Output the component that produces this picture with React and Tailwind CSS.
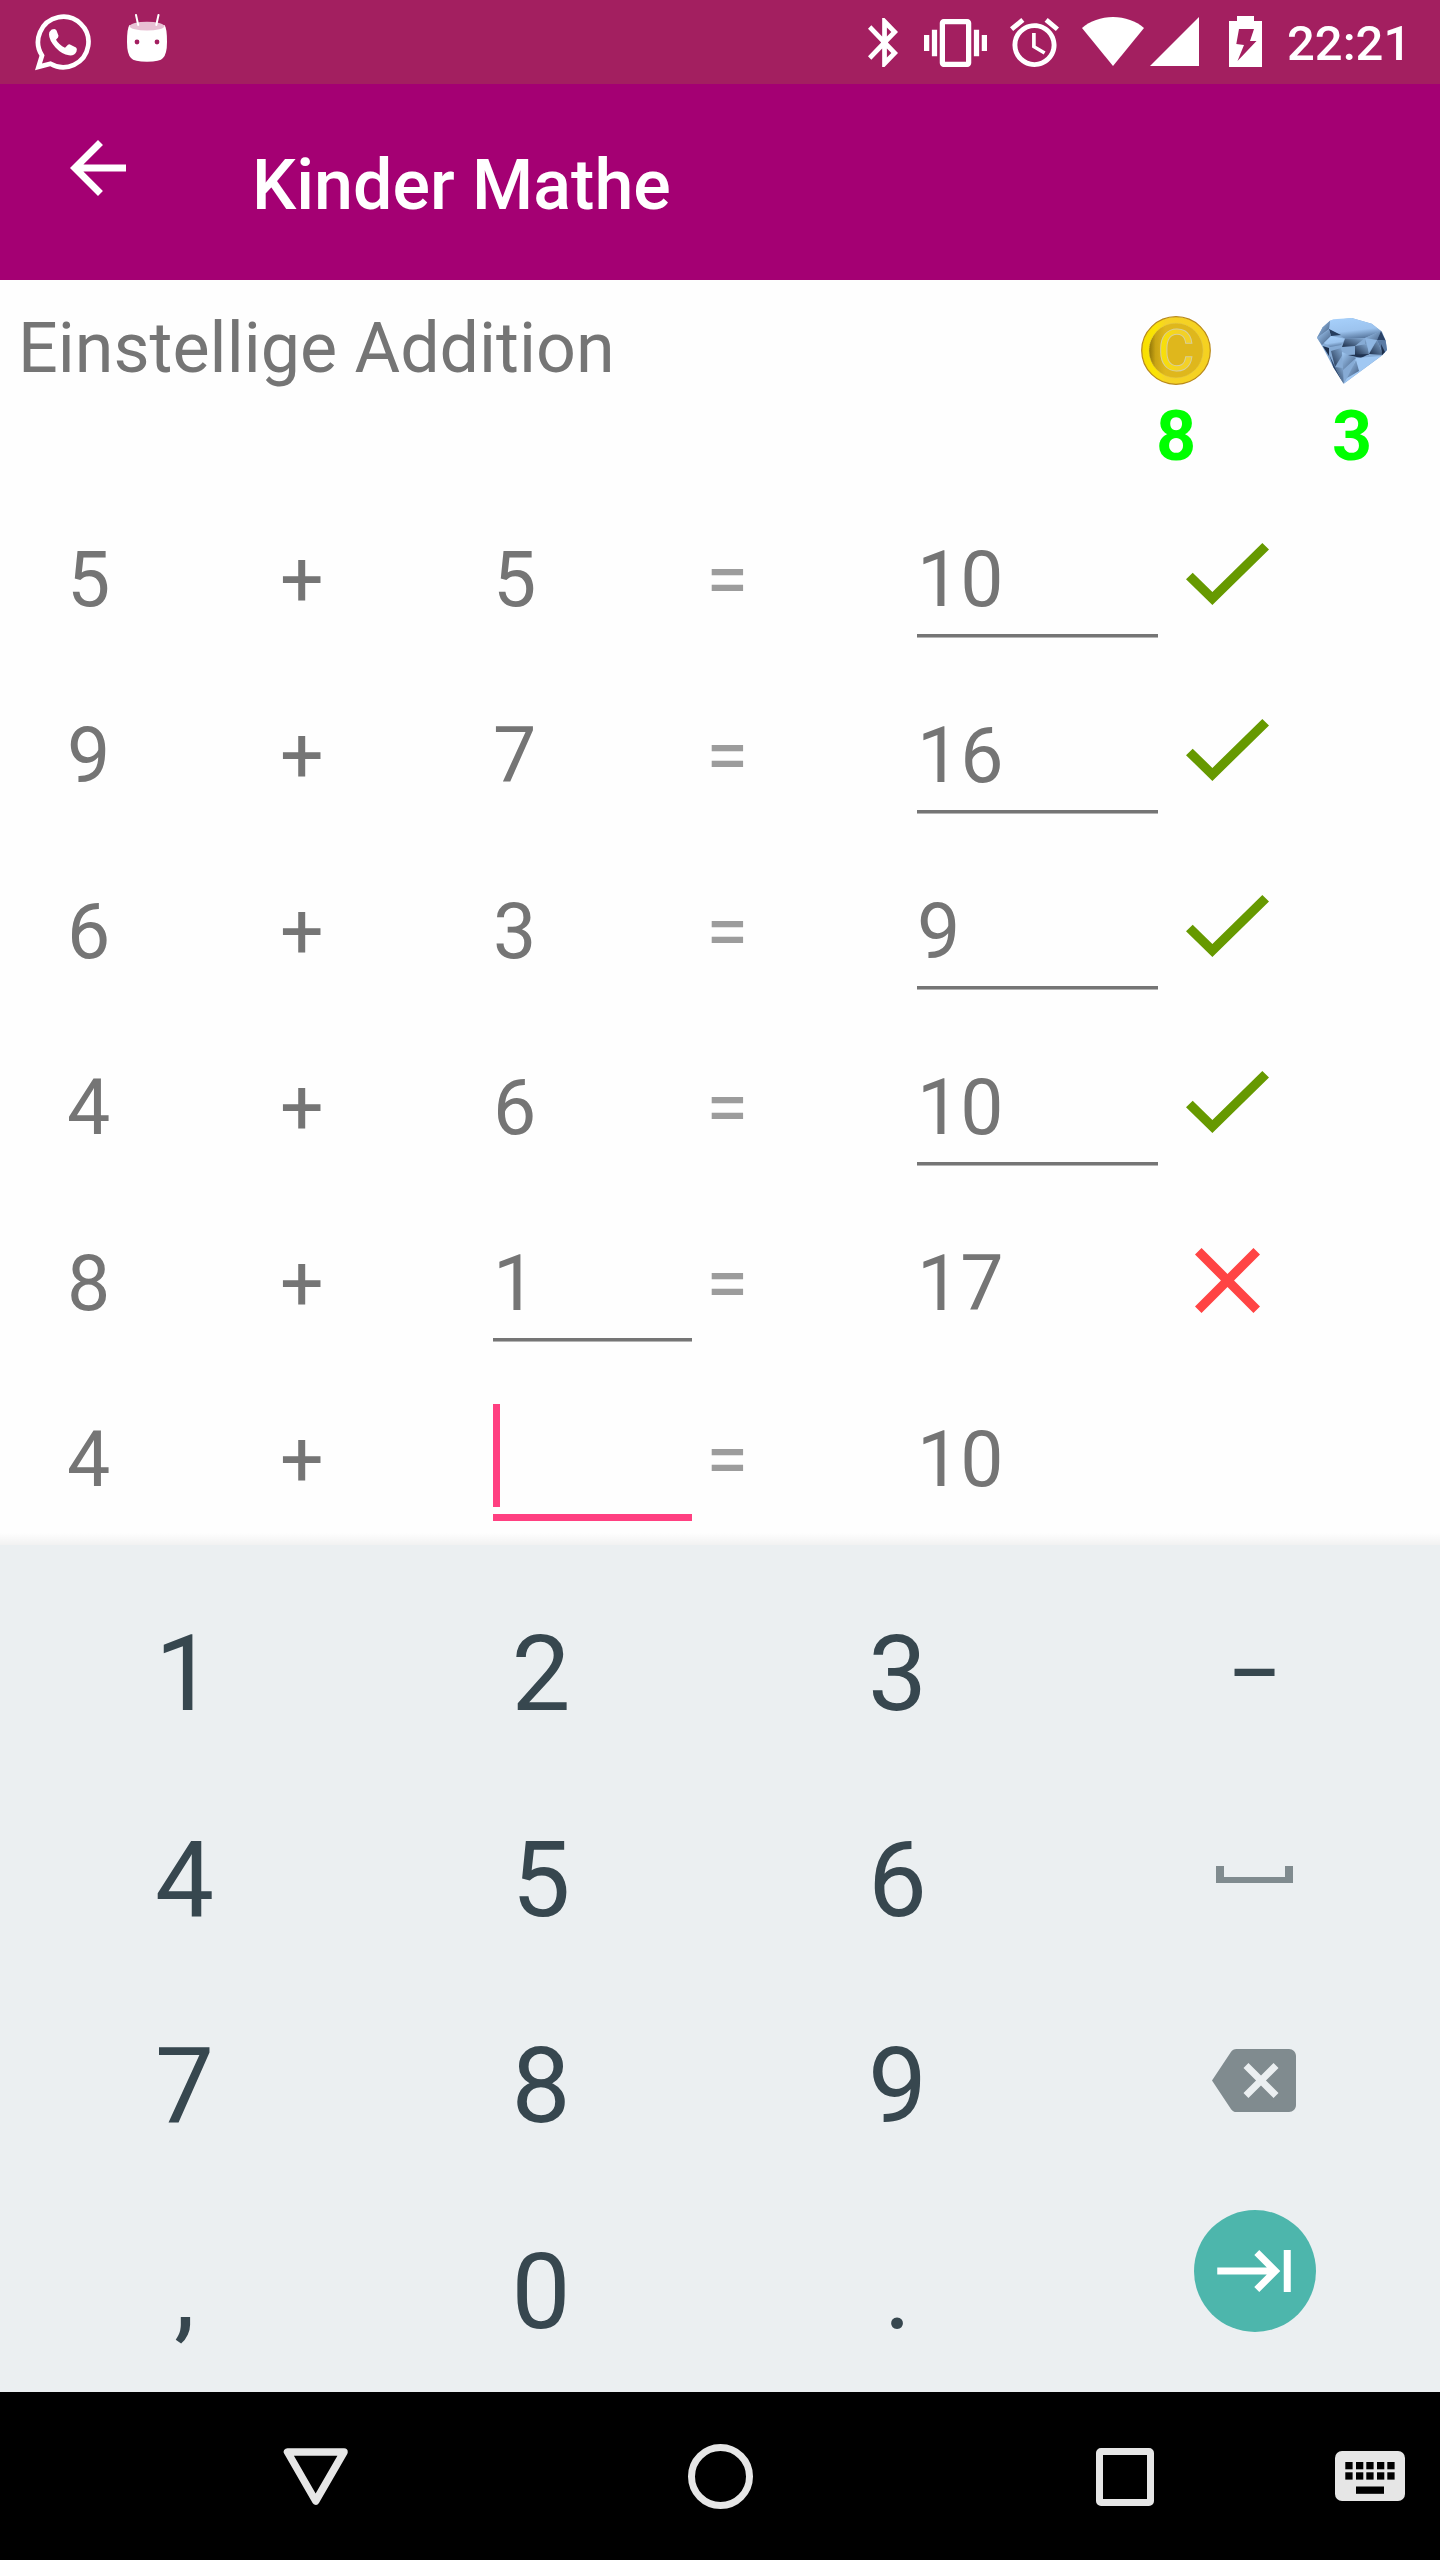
const rows = [
  { left: "5", right: "5", result: "10", input: "result", state: "ok" },
  { left: "9", right: "7", result: "16", input: "result", state: "ok" },
  { left: "6", right: "3", result: "9", input: "result", state: "ok" },
  { left: "4", right: "6", result: "10", input: "result", state: "ok" },
  { left: "8", right: "1", result: "17", input: "right", state: "wrong" },
  { left: "4", right: "", result: "10", input: "right", state: "active" },
];

function StatusBar() {
  return (
    <div className="h-[84px] bg-[#a31f60] flex items-start text-white">
      <div className="w-[868px] flex items-start pl-[35px] pt-[14px] gap-9">
        <svg className="w-[57px] h-[57px]" viewBox="0 0 57 57" fill="none">
          <path d="M7 41.5A25.2 25.2 0 1 1 15.5 49.7L3.5 52.8Z" stroke="currentColor" strokeWidth="4.7" />
          <path fill="currentColor" d="M16.7 15.6Q20.5 14 21.5 16.5L23.5 21.8Q23.8 23.2 21 25.8Q24 31 30 33.7L33 30.8Q34 30 35 30.5L41 33.5Q42.5 34.5 41.5 37.5Q39.5 42 34 41.3Q27 40.5 20.5 33.5Q14 26 14 20.5Q14 17.5 16.7 15.6Z" />
        </svg>
        <svg className="w-10 h-12 -ml-px" viewBox="0 0 40 48">
          <path fill="#fff" d="M2.5 11Q20 19 37.5 11Q40 14 40 28Q40 40 36 44Q33 47.8 20 47.8Q7 47.8 4 44Q0 40 0 28Q0 14 2.5 11Z" />
          <ellipse cx="20" cy="12.2" rx="17.2" ry="4.4" fill="#e8c0d4" />
          <path d="M9 1l2.2 10M31.5 1l-2.2 10" stroke="#fff" strokeWidth="2" strokeLinecap="round" />
          <circle cx="10" cy="28" r="2.4" fill="#a31f60" />
          <circle cx="30" cy="28" r="2.4" fill="#a31f60" />
        </svg>
      </div>
      <svg className="w-[30px] h-[49px] mt-[18px]" viewBox="5 2 12.71 20" preserveAspectRatio="none" fill="currentColor">
        <path d="M17.71 7.71L12 2h-1v7.59L6.41 5 5 6.41 10.59 12 5 17.59 6.41 19 11 14.41V22h1l5.71-5.71-4.3-4.29 4.3-4.29zM13 5.83l1.88 1.88L13 9.59V5.83zm1.88 10.46L13 18.17v-3.76l1.88 1.88z" />
      </svg>
      <svg className="w-[63px] h-[48px] mt-[19px] ml-[26px]" viewBox="0 3 24 18" preserveAspectRatio="none" fill="currentColor">
        <path d="M0 15h2V9H0v6zm3 2h2V7H3v10zm19-8v6h2V9h-2zm-3 8h2V7h-2v10zM16.5 3h-9C6.67 3 6 3.67 6 4.5v15c0 .83.67 1.5 1.5 1.5h9c.83 0 1.5-.67 1.5-1.5v-15c0-.83-.67-1.5-1.5-1.5zM16 19H8V5h8v14z" />
      </svg>
      <svg className="w-[49px] h-[49px] mt-[18px] ml-[23px]" viewBox="2 1.86 20 20.14" preserveAspectRatio="none" fill="currentColor">
        <path d="M22 5.72l-4.6-3.86-1.29 1.53 4.6 3.86L22 5.72zM7.88 3.39L6.6 1.86 2 5.71l1.29 1.53 4.59-3.85zM12.5 8H11v6l4.75 2.85.75-1.23-4-2.37V8zM12 4c-4.97 0-9 4.03-9 9s4.02 9 9 9c4.97 0 9-4.03 9-9s-4.03-9-9-9zm0 16c-3.87 0-7-3.13-7-7s3.13-7 7-7 7 3.13 7 7-3.13 7-7 7z" />
      </svg>
      <svg className="w-[62px] h-[49px] mt-[17px] ml-[23px]" viewBox="0 0 62 49" fill="currentColor">
        <path d="M31 49L0 11C8 4 19 0 31 0s23 4 31 11z" />
      </svg>
      <svg className="w-[49px] h-[49px] mt-[17px] ml-[6px]" viewBox="0 0 49 49" fill="currentColor">
        <path d="M49 0v49H0z" />
      </svg>
      <svg className="w-[33px] h-[51px] mt-[16px] ml-[30px]" viewBox="0 0 33 51">
        <path fill="currentColor" d="M8 0h17v5h8v46H0V5h8z" />
        <path fill="#a31f60" d="M10 13h15l-4 12h6.5l-19 20L15 29l-7.7-1z" />
      </svg>
      <span className="ml-[25px] mt-[16px] text-[49px] leading-[56px] font-medium">22:21</span>
    </div>
  );
}

function Coin() {
  return (
    <svg className="w-[70px] h-[69px]" viewBox="0 0 70 69">
      <defs>
        <linearGradient id="rim" x1="0" x2="1">
          <stop offset="0" stopColor="#f7de00" />
          <stop offset="0.2" stopColor="#fbe404" />
          <stop offset="0.35" stopColor="#f5d327" />
          <stop offset="1" stopColor="#f5d120" />
        </linearGradient>
        <linearGradient id="face" x1="0" x2="1">
          <stop offset="0" stopColor="#8f7508" />
          <stop offset="0.12" stopColor="#c9a414" />
          <stop offset="0.3" stopColor="#dfb71c" />
          <stop offset="1" stopColor="#dfb71c" />
        </linearGradient>
        <linearGradient id="letter" x1="0" x2="1">
          <stop offset="0" stopColor="#f9e300" />
          <stop offset="0.6" stopColor="#f3d127" />
        </linearGradient>
      </defs>
      <ellipse cx="35" cy="34.5" rx="34.3" ry="33.8" fill="url(#rim)" stroke="#b8891c" strokeWidth="1.2" />
      <ellipse cx="35" cy="34.5" rx="27" ry="27.3" fill="url(#face)" stroke="#d9c25a" strokeWidth="0.8" strokeDasharray="1 1" />
      <text x="35" y="54" textAnchor="middle" fontSize="55" fill="url(#letter)" stroke="#d8cf9c" strokeWidth="2" paintOrder="stroke">C</text>
    </svg>
  );
}

function Diamond() {
  return (
    <svg className="w-[70px] h-[66px]" viewBox="0 0 70 66">
      <defs>
        <linearGradient id="table" x1="0.3" y1="0" x2="0.6" y2="1">
          <stop offset="0" stopColor="#a6cffa" />
          <stop offset="0.6" stopColor="#9cc3ee" />
          <stop offset="1" stopColor="#55749b" />
        </linearGradient>
        <linearGradient id="facet" x1="0" y1="0" x2="1" y2="1">
          <stop offset="0" stopColor="#a3ccf7" />
          <stop offset="1" stopColor="#40597c" />
        </linearGradient>
        <linearGradient id="shade" x1="0" y1="1" x2="1" y2="0">
          <stop offset="0" stopColor="#1d2f4b" />
          <stop offset="1" stopColor="#88aed8" />
        </linearGradient>
      </defs>
      <path fill="#86abd5" d="M0 19.7L5.7 9.3L13 2.7L34.7 0L54.7 5.7L65 13.7L68.7 22.7L70 32L65.7 37L26.7 65.7L16.3 49.3L5.7 29.3Z" />
      <path fill="url(#table)" d="M13 2.7L16.3 1.3L34.7 0L54.7 5.7L64 13L48 20L28 20.7L12 11Z" />
      <path fill="url(#facet)" d="M13 2.7L12 11L0 19.7L5.7 9.3Z" />
      <path fill="#263d5e" d="M12 11L24 17L14 18Z" />
      <path fill="url(#facet)" d="M0 19.7L12 12L14 18L5 27Z" />
      <path fill="url(#table)" d="M14 18L28 20.7L24 27L13 29L7 25Z" />
      <path fill="url(#shade)" d="M28 20.7L48 20L38 28L25 29Z" />
      <path fill="url(#facet)" d="M64 13L60 22L48 26L48 20Z" />
      <path fill="#2c4468" d="M64 13L68.7 22.7L60 22Z" />
      <path fill="url(#shade)" d="M60 22L66 37L52 36Z" />
      <path fill="#5a7ba5" d="M60 22L68.7 22.7L70 32L66 36Z" />
      <path fill="#1d2f4b" d="M64 26L68 34L65 37Z" />
      <path fill="url(#shade)" d="M38 28L50 26L52 37L38 37Z" />
      <path fill="#8fb6e2" d="M48 20L60 22L52 34Z" />
      <path fill="#1d2f4b" d="M5.7 28L12 30L12 38Z" />
      <path fill="url(#shade)" d="M14 33L24 30L26 36L18 49Z" />
      <path fill="url(#facet)" d="M25 34L39 40L26 52Z" />
      <path fill="#1f3352" d="M31 37L52 36L44 40Z" />
      <path fill="#a0c8f3" d="M39 40L64 38L26.7 65.7L35 52Z" />
      <path fill="url(#facet)" d="M39 42L42 53L30 60Z" />
      <path fill="#2c4468" d="M12 36L18 49L26.7 65.7L16.3 49.3Z" />
      <path fill="url(#shade)" d="M18 49L26 50L26.7 65.7Z" />
    </svg>
  );
}

function Field({ value, width, active }) {
  return (
    <div className={`${width} h-[176px] relative`}>
      <span>{value}</span>
      <div className={active ? "absolute left-0 top-[142px] w-full h-[7px] bg-[#ff4081]" : "absolute left-0 top-[142px] w-full h-[3px] bg-[#757575] shadow-[0_1px_#b5b5b5]"}></div>
      {active && <div className="absolute left-0 top-8 w-[7px] h-[103px] bg-[#ff4081]"></div>}
    </div>
  );
}

function Row({ row }) {
  return (
    <div className="h-[176px] shrink-0 pl-[67px] grid grid-cols-[213px_213px_213px_211px_268px_1fr] text-[77px] leading-[176px] text-[#757575]">
      <span>{row.left}</span>
      <span>+</span>
      {row.input === "right" ? (
        <Field value={row.right} width="w-[199px]" active={row.state === "active"} />
      ) : (
        <span>{row.right}</span>
      )}
      <span className="text-[#9c9c9c]">=</span>
      {row.input === "result" ? <Field value={row.result} width="w-[241px]" /> : <span>{row.result}</span>}
      <div className="pt-[51px]">
        {row.state === "ok" && (
          <svg className="w-[83px] h-[62px] ml-px" viewBox="3.41 5.59 17.59 13.41" preserveAspectRatio="none" fill="#669900">
            <path d="M9 16.17L4.83 12l-1.42 1.41L9 19 21 7l-1.41-1.41z" />
          </svg>
        )}
        {row.state === "wrong" && (
          <svg className="w-[65px] h-[65px] mt-px ml-[10px]" viewBox="5 5 14 14" fill="#ff4444">
            <path d="M19 6.41L17.59 5 12 10.59 6.41 5 5 6.41 10.59 12 5 17.59 6.41 19 12 13.41 17.59 19 19 17.59 13.41 12z" />
          </svg>
        )}
      </div>
    </div>
  );
}

function Key({ children }) {
  return <div className="h-[206px] flex items-center justify-center">{children}</div>;
}

function Keyboard() {
  return (
    <div className="h-[847px] shrink-0 overflow-hidden bg-[#ebeff1] pt-[27px] pl-[6px] grid grid-cols-[357px_356px_357px_357px] auto-rows-[206px] text-[105px] leading-[124px] text-[#37474f]">
      <Key>1</Key>
      <Key>2</Key>
      <Key>3</Key>
      <Key>
        <span className="text-[98px] -mt-0.5">−</span>
      </Key>
      <Key>4</Key>
      <Key>5</Key>
      <Key>6</Key>
      <Key>
        <svg className="w-[77px] h-[17px] -mt-[13px]" viewBox="0 0 77 17" fill="#808b8f">
          <path d="M0 0h8v11h61V0h8v17H0z" />
        </svg>
      </Key>
      <Key>7</Key>
      <Key>8</Key>
      <Key>9</Key>
      <Key>
        <svg className="w-[84px] h-[63px] -mt-[13px] mr-px" viewBox="0 3 24 18" fill="#808b8f">
          <path d="M22 3H7c-.69 0-1.23.35-1.59.88L0 12l5.41 8.11c.36.53.9.89 1.59.89h15c1.1 0 2-.9 2-2V5c0-1.1-.9-2-2-2zm-3 12.59L17.59 17 14 13.41 10.41 17 9 15.59 12.59 12 9 8.41 10.41 7 14 10.59 17.59 7 19 8.41 15.41 12 19 15.59z" />
        </svg>
      </Key>
      <Key>,</Key>
      <Key>0</Key>
      <Key>.</Key>
      <Key>
        <div className="w-[122px] h-[122px] -mt-11 rounded-full bg-[#4db6ac] flex items-center justify-center">
          <svg className="w-[74px] h-[42px] mr-px mb-px" viewBox="1 6 21 12" fill="#fff">
            <path d="M11.59 7.41L15.17 11H1v2h14.17l-3.59 3.59L13 18l6-6-6-6-1.41 1.41zM20 6v12h2V6h-2z" />
          </svg>
        </div>
      </Key>
    </div>
  );
}

function NavBar() {
  return (
    <div className="h-[168px] bg-black flex items-start pl-[283px]">
      <svg className="w-[66px] h-[58px] mt-14" viewBox="0 0 66 58" fill="none">
        <path d="M4.5 4H61L32.7 53Z" stroke="#e6e6e6" strokeWidth="7.5" strokeLinejoin="round" />
      </svg>
      <div className="w-[65px] h-[65px] mt-[52px] ml-[339px] rounded-full border-[7px] border-[#e6e6e6]"></div>
      <div className="w-[58px] h-[58px] mt-[56px] ml-[343px] rounded-[5px] border-[7px] border-[#e6e6e6]"></div>
      <svg className="w-[70px] h-[50px] mt-[59px] ml-[181px]" viewBox="0 0 70 50">
        <rect width="70" height="50" rx="7" fill="#e6e6e6" />
        {[10.3, 21, 31.3, 42, 52.3].map((x) => (
          <g key={x}>
            <rect x={x} y="11" width="7.3" height="7.3" />
            <rect x={x} y="21.3" width="7.3" height="7.3" />
          </g>
        ))}
        <rect x="21" y="35.5" width="28" height="7.3" />
      </svg>
    </div>
  );
}

function App() {
  return (
    <div className="w-[1440px] h-[2560px] overflow-hidden flex flex-col bg-[#fefefe] font-['Roboto',sans-serif]">
      <StatusBar />
      <header className="h-[196px] bg-[#a40073] flex items-start text-white">
        <svg className="w-[56px] h-[56px] mt-14 ml-[70px]" viewBox="4 4 16 16" fill="currentColor">
          <path d="M20 11H7.83l5.59-5.59L12 4l-8 8 8 8 1.41-1.41L7.83 13H20v-2z" />
        </svg>
        <h1 className="ml-[126px] mt-[60px] text-[70px] leading-[82px] font-medium">Kinder Mathe</h1>
      </header>

      <main className="h-[1265px] shrink-0 overflow-hidden relative">
        <div className="h-[212px] flex items-start">
          <h2 className="flex-1 pl-[18px] pt-[27px] text-[70px] leading-[82px] text-[#757575]">Einstellige Addition</h2>
          <div className="w-44 pt-[36px] flex flex-col items-center">
            <Coin />
            <span className="mt-[10px] text-[70px] leading-[82px] font-bold text-[#00ff00]">8</span>
          </div>
          <div className="w-44 pt-[38px] flex flex-col items-center">
            <Diamond />
            <span className="mt-[11px] text-[70px] leading-[82px] font-bold text-[#00ff00]">3</span>
          </div>
        </div>
        {rows.map((row, i) => (
          <Row key={i} row={row} />
        ))}
        <div className="absolute bottom-0 left-0 w-full h-3 bg-linear-to-b from-transparent to-black/5"></div>
      </main>

      <Keyboard />
      <NavBar />
    </div>
  );
}

export default App;
